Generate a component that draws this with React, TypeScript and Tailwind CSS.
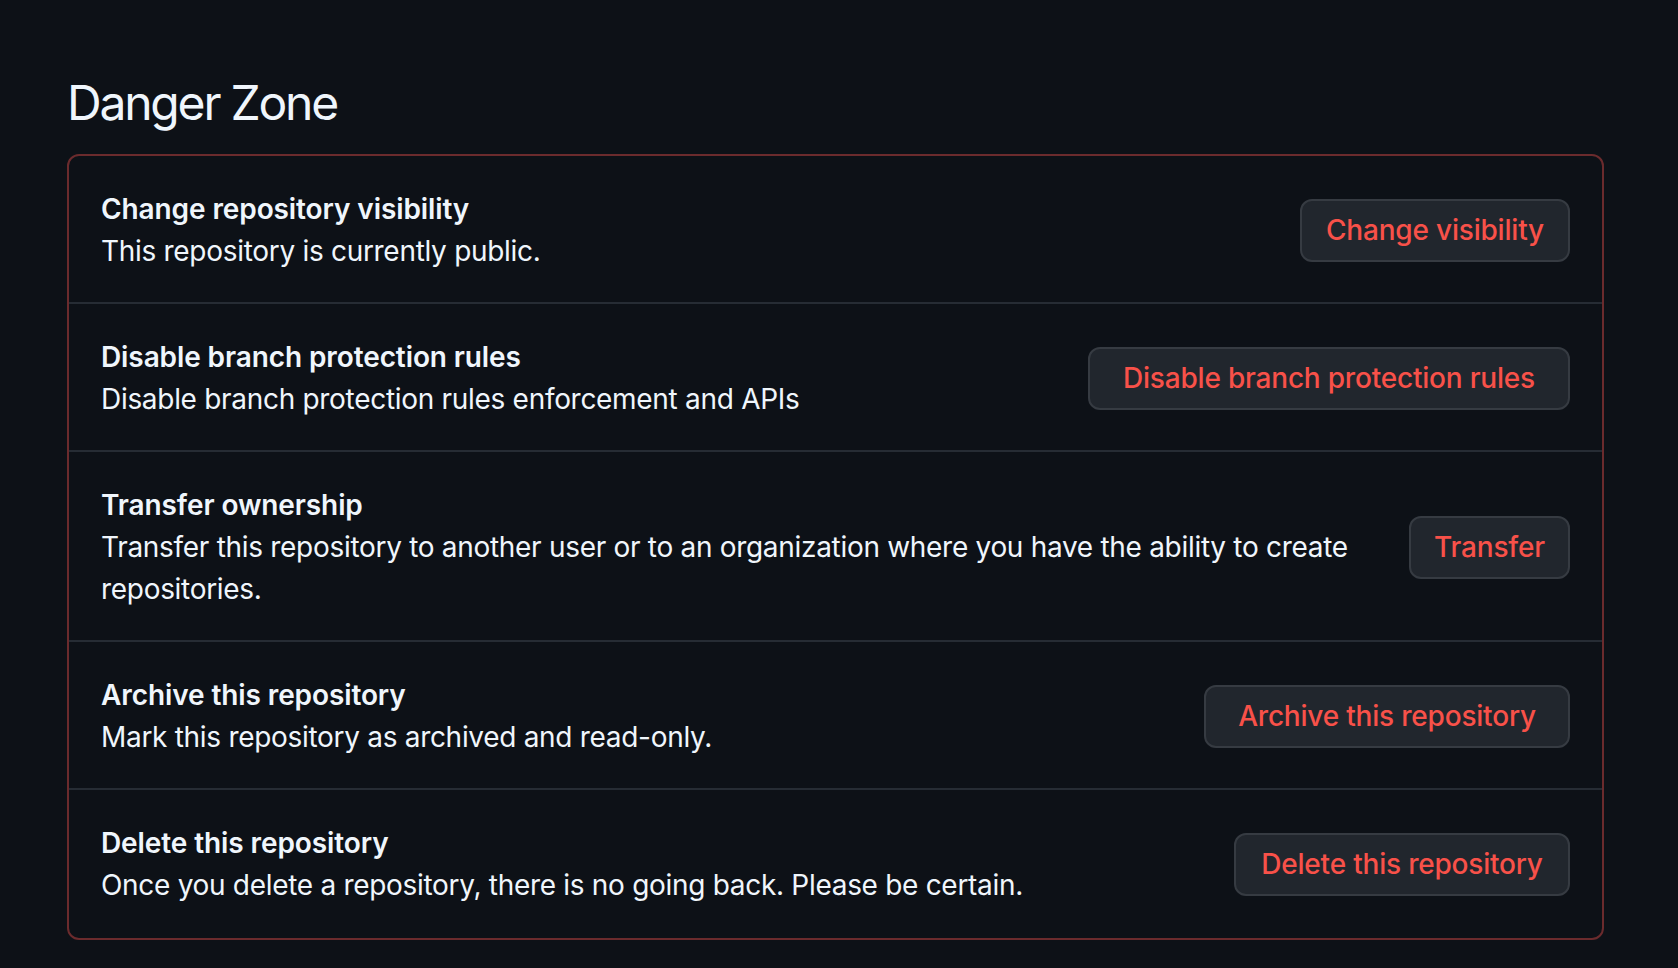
import React from 'react';

const rows = [
  {
    title: 'Change repository visibility',
    desc: 'This repository is currently public.',
    action: 'Change visibility',
    width: 'w-[270px]',
  },
  {
    title: 'Disable branch protection rules',
    desc: 'Disable branch protection rules enforcement and APIs',
    action: 'Disable branch protection rules',
    width: 'w-[482px]',
  },
  {
    title: 'Transfer ownership',
    desc: 'Transfer this repository to another user or to an organization where you have the ability to create repositories.',
    action: 'Transfer',
    width: 'w-[161px]',
  },
  {
    title: 'Archive this repository',
    desc: 'Mark this repository as archived and read-only.',
    action: 'Archive this repository',
    width: 'w-[366px]',
  },
  {
    title: 'Delete this repository',
    desc: 'Once you delete a repository, there is no going back. Please be certain.',
    action: 'Delete this repository',
    width: 'w-[336px]',
  },
];

export default function App() {
  return (
    <div
      className="min-h-screen bg-[#0d1117] pl-[67px] pr-[74px] pt-[67px] text-[#f0f6fc]"
      style={{ fontFamily: 'Inter, "Noto Sans", sans-serif' }}
    >
      <h2 className="text-[48px] leading-[72px] font-normal tracking-[-2.2px] mb-[15px]">Danger Zone</h2>

      <div className="rounded-[12px] border-2 border-[#6b2b2d]">
        {rows.map((r, i) => (
          <div
            key={r.title}
            className={
              'flex items-center gap-8 px-8 pt-[32px]' +
              (i > 0 ? ' border-t-2 border-[#262c34]' : '') +
              (i === rows.length - 1 ? ' pb-[32px]' : ' pb-[30px]')
            }
          >
            <div className="flex-auto text-[28px] leading-[42px]">
              <p className="font-semibold tracking-[-0.1px]">{r.title}</p>
              <p className="font-normal tracking-[-0.3px]">{r.desc}</p>
            </div>
            <button
              className={
                'shrink-0 h-[63px] rounded-[12px] border-2 border-[#363b42] bg-[#21262d] text-[28px] font-medium tracking-[-0.2px] text-[#f85149] ' +
                r.width
              }
            >
              {r.action}
            </button>
          </div>
        ))}
      </div>
    </div>
  );
}
